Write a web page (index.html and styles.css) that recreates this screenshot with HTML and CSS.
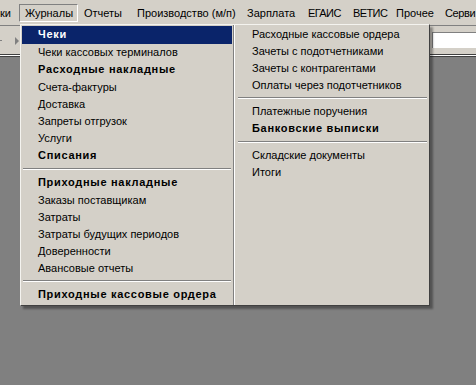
FILE: index.html
```html
<!DOCTYPE html>
<html lang="ru">
<head>
<meta charset="utf-8">
<title>Журналы</title>
<link rel="stylesheet" href="styles.css">
</head>
<body>
<div class="app">
  <nav class="menubar">
    <span class="mb-item mb-first">ки</span>
    <span class="mb-item mb-active">Журналы</span>
    <span class="mb-item">Отчеты</span>
    <span class="mb-item">Производство (м/п)</span>
    <span class="mb-item">Зарплата</span>
    <span class="mb-item mb-caps">ЕГАИС</span>
    <span class="mb-item mb-caps">ВЕТИС</span>
    <span class="mb-item">Прочее</span>
    <span class="mb-item mb-last">Серви</span>
  </nav>
  <div class="toolbar">
    <svg class="tb-icons" width="22" height="27" viewBox="0 0 22 27">
      <rect x="0" y="14" width="2" height="1" fill="#808080"/>
      <path d="M15 11 L19 15 L15 19 Z" fill="#808080"/>
    </svg>
    <div class="tb-field"></div>
  </div>
  <div class="tb-edge"></div>
  <div class="workspace"></div>

  <div class="dropdown">
    <ul class="col col-left">
      <li class="item bold active">Чеки</li>
      <li class="item">Чеки кассовых терминалов</li>
      <li class="item bold">Расходные накладные</li>
      <li class="item">Счета-фактуры</li>
      <li class="item">Доставка</li>
      <li class="item">Запреты отгрузок</li>
      <li class="item">Услуги</li>
      <li class="item bold">Списания</li>
      <li class="sep"></li>
      <li class="item bold">Приходные накладные</li>
      <li class="item">Заказы поставщикам</li>
      <li class="item">Затраты</li>
      <li class="item">Затраты будущих периодов</li>
      <li class="item">Доверенности</li>
      <li class="item">Авансовые отчеты</li>
      <li class="sep"></li>
      <li class="item bold">Приходные кассовые ордера</li>
    </ul>
    <div class="divider"></div>
    <ul class="col col-right">
      <li class="item">Расходные кассовые ордера</li>
      <li class="item">Зачеты с подотчетниками</li>
      <li class="item">Зачеты с контрагентами</li>
      <li class="item">Оплаты через подотчетников</li>
      <li class="sep"></li>
      <li class="item">Платежные поручения</li>
      <li class="item bold">Банковские выписки</li>
      <li class="sep"></li>
      <li class="item">Складские документы</li>
      <li class="item">Итоги</li>
    </ul>
  </div>
</div>
</body>
</html>
```

FILE: styles.css
```css
html, body {
  margin: 0;
  padding: 0;
  background: #808080;
}
body {
  font-family: "Liberation Sans", Arial, sans-serif;
  font-size: 11px;
  color: #000;
  width: 476px;
  height: 385px;
  overflow: hidden;
}
.app {
  position: relative;
  width: 476px;
  height: 385px;
  display: flex;
  flex-direction: column;
  overflow: hidden;
}
.menubar {
  height: 25px;
  box-sizing: border-box;
  padding-top: 4px;
  background: #d4d0c8;
  display: grid;
  grid-template-columns: 19px 59px 53px 110px 61px 45px 43px 49px 1fr;
  align-items: start;
  white-space: nowrap;
  overflow: hidden;
}
.mb-item {
  display: block;
  height: 18px;
  box-sizing: border-box;
  line-height: 16px;
  padding: 0 5px;
  border: 1px solid transparent;
  min-width: 0;
}
.mb-first {
  padding-left: 0;
  padding-right: 0;
  border-left: 0;
}
.mb-caps {
  letter-spacing: -0.6px;
}
.mb-last {
  padding-right: 0;
  letter-spacing: -0.4px;
}
.mb-active {
  border-color: #808080 #fff #fff #808080;
}
.toolbar {
  height: 29px;
  box-sizing: border-box;
  border-top: 1px solid #808080;
  background: #d4d0c8;
  display: flex;
  align-items: flex-start;
}
.tb-icons {
  display: block;
  flex: none;
}
.tb-field {
  margin-left: auto;
  margin-top: 6px;
  width: 44px;
  height: 16px;
  box-sizing: border-box;
  background: #fff;
  border-top: 1px solid #808080;
  border-left: 1px solid #808080;
}
.tb-edge {
  height: 3px;
  box-sizing: border-box;
  background: #fff;
  border-top: 1px solid #404040;
  border-bottom: 1px solid #404040;
}
.workspace {
  flex: 1;
  background: #808080;
}
.dropdown {
  position: absolute;
  left: 20px;
  top: 24px;
  width: 410px;
  box-sizing: border-box;
  background: #d4d0c8;
  border: 1px solid;
  border-color: #f4f3ef #404040 #404040 #f4f3ef;
  padding: 1px;
  display: flex;
  box-shadow: 3px 3px 2px rgba(0, 0, 0, 0.35);
}
.col {
  list-style: none;
  margin: 0;
  padding: 0;
}
.col-left {
  width: 210px;
}
.col-right {
  flex: 1;
}
.divider {
  width: 2px;
  margin: -1px 0 -1px 1px;
  border-left: 1px solid #808080;
  box-sizing: border-box;
  background: #fff;
}
.item {
  height: 17px;
  line-height: 17px;
  white-space: nowrap;
}
.col-left .item {
  padding-left: 16px;
}
.col-right .item {
  padding-left: 17px;
}
.item.bold {
  height: 18px;
  font-weight: bold;
  letter-spacing: 0.7px;
}
.item.active {
  background: #0a246a;
  color: #fff;
}
.sep {
  height: 9px;
  box-sizing: border-box;
  padding-top: 3px;
}
.sep::before {
  content: "";
  display: block;
  height: 2px;
  box-sizing: border-box;
  border-top: 1px solid #808080;
  background: #fff;
}
.col-left .sep::before {
  margin: 0 1px;
}
.col-right .sep::before {
  margin: 0 1px 0 3px;
}
```
